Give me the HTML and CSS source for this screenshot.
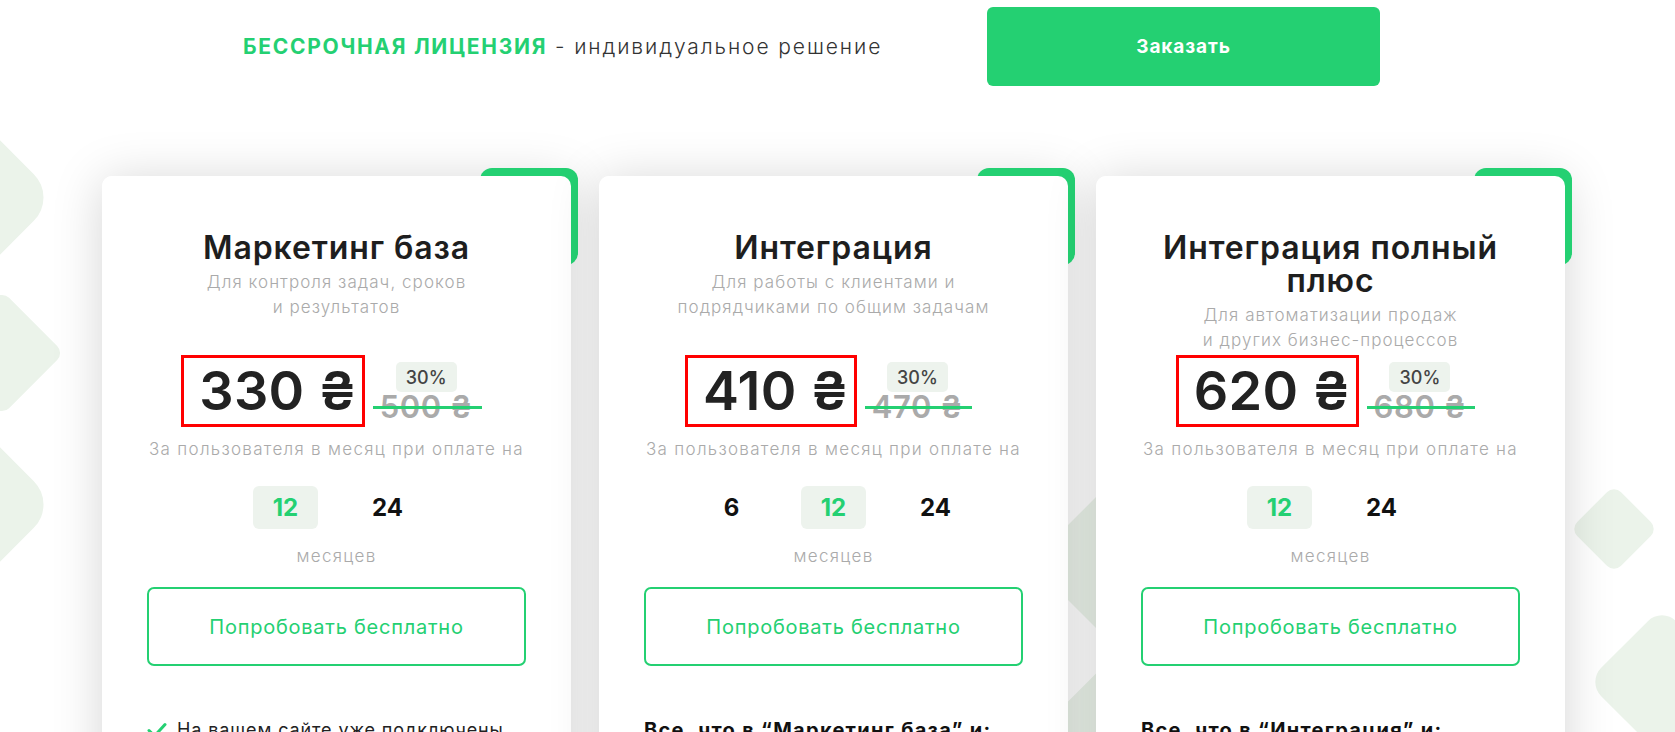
FILE: index.html
```html
<!DOCTYPE html>
<html lang="ru">
<head>
<meta charset="utf-8">
<title>Тарифы</title>
<link rel="stylesheet" href="styles.css">
</head>
<body>
<div class="bg" aria-hidden="true">
  <span class="shape s1"></span>
  <span class="shape s2"></span>
  <span class="shape s3"></span>
  <span class="shape s4"></span>
  <span class="shape s5"></span>
  <span class="shape s6"></span>
  <span class="shape s7"></span>
</div>

<header class="topbar">
  <p class="lead"><strong>БЕССРОЧНАЯ ЛИЦЕНЗИЯ</strong> - индивидуальное решение</p>
  <a class="order" href="#">Заказать</a>
</header>

<main class="plans">
  <section class="plan">
    <span class="plan-corner"></span>
    <div class="plan-card">
      <div class="plan-head">
        <h2 class="plan-title">Маркетинг база</h2>
        <p class="plan-sub">Для контроля задач, сроков<br>и результатов</p>
      </div>
      <div class="price-row">
        <div class="price">330 ₴</div>
        <div class="old">
          <span class="badge">30%</span>
          <span class="old-price">500 ₴</span>
        </div>
      </div>
      <p class="per">За пользователя в месяц при оплате на</p>
      <div class="terms">
        <span class="term on">12</span>
        <span class="term">24</span>
      </div>
      <p class="months">месяцев</p>
      <a class="try" href="#">Попробовать бесплатно</a>
      <ul class="features">
        <li><svg class="check" viewBox="0 0 20 16" width="20" height="16"><path d="M2 8.5 L7.5 14 L18 2.5" fill="none" stroke="#24d072" stroke-width="3" stroke-linecap="round" stroke-linejoin="round"/></svg>На вашем сайте уже подключены</li>
        <li><svg class="check" viewBox="0 0 20 16" width="20" height="16"><path d="M2 8.5 L7.5 14 L18 2.5" fill="none" stroke="#24d072" stroke-width="3" stroke-linecap="round" stroke-linejoin="round"/></svg>Управление задачами и сроками</li>
      </ul>
    </div>
  </section>

  <section class="plan">
    <span class="plan-corner"></span>
    <div class="plan-card">
      <div class="plan-head">
        <h2 class="plan-title">Интеграция</h2>
        <p class="plan-sub">Для работы с клиентами и<br>подрядчиками по общим задачам</p>
      </div>
      <div class="price-row">
        <div class="price">410 ₴</div>
        <div class="old">
          <span class="badge">30%</span>
          <span class="old-price">470 ₴</span>
        </div>
      </div>
      <p class="per">За пользователя в месяц при оплате на</p>
      <div class="terms">
        <span class="term">6</span>
        <span class="term on">12</span>
        <span class="term">24</span>
      </div>
      <p class="months">месяцев</p>
      <a class="try" href="#">Попробовать бесплатно</a>
      <p class="includes">Все, что в “Маркетинг база” и:</p>
    </div>
  </section>

  <section class="plan">
    <span class="plan-corner"></span>
    <div class="plan-card">
      <div class="plan-head">
        <h2 class="plan-title">Интеграция полный плюс</h2>
        <p class="plan-sub">Для автоматизации продаж<br>и других бизнес-процессов</p>
      </div>
      <div class="price-row">
        <div class="price">620 ₴</div>
        <div class="old">
          <span class="badge">30%</span>
          <span class="old-price">680 ₴</span>
        </div>
      </div>
      <p class="per">За пользователя в месяц при оплате на</p>
      <div class="terms">
        <span class="term on">12</span>
        <span class="term">24</span>
      </div>
      <p class="months">месяцев</p>
      <a class="try" href="#">Попробовать бесплатно</a>
      <p class="includes">Все, что в “Интеграция” и:</p>
    </div>
  </section>
</main>
</body>
</html>
```
FILE: styles.css
```css
* { box-sizing: border-box; }

html, body {
  margin: 0;
  height: 732px;
  overflow: hidden;
  background: #fff;
}

body {
  position: relative;
  font-family: Inter, "Noto Sans", sans-serif;
  color: #222;
}

/* decorative background diamonds */
.bg {
  position: absolute;
  inset: 0;
  pointer-events: none;
}
.shape {
  position: absolute;
  background: #ebf3ea;
  transform: rotate(45deg);
}
.s1 { left: -142px; top: 115px; width: 165px; height: 165px; border-radius: 33px; }
.s2 { left: -42px;  top: 309px; width: 88px;  height: 88px;  border-radius: 10px; }
.s3 { left: -142px; top: 422px; width: 165px; height: 165px; border-radius: 33px; }
.s4 { left: 1583px; top: 498px; width: 62px;  height: 62px;  border-radius: 10px; }
.s5 { left: 1609px; top: 629px; width: 106px; height: 106px; border-radius: 20px; }
.s6 { left: 1054px; top: 506px; width: 113px; height: 113px; border-radius: 12px; }
.s7 { left: 1072px; top: 652px; width: 156px; height: 156px; border-radius: 20px; }

/* top bar */
.topbar {
  position: relative;
  display: flex;
  align-items: center;
  gap: 100px;
  padding: 7px 0 0 243px;
}
.lead {
  flex: 0 0 644px;
  margin: 0;
  font-size: 21px;
  font-weight: 300;
  color: #333;
  letter-spacing: 1.9px;
  white-space: nowrap;
}
.lead strong {
  font-weight: 700;
  color: #24d072;
  letter-spacing: 1.7px;
}
.order {
  flex: 0 0 393px;
  height: 79px;
  display: flex;
  align-items: center;
  justify-content: center;
  background: #24d072;
  border-radius: 6px;
  color: #fff;
  font-size: 19px;
  font-weight: 700;
  letter-spacing: 0.9px;
  text-decoration: none;
}

/* plans */
.plans {
  position: relative;
  display: flex;
  gap: 28px;
  padding-left: 102px;
  margin-top: 90px;
}
.plan {
  position: relative;
  flex: 0 0 469px;
  border-radius: 10px;
  box-shadow: 0 4px 50px rgba(0, 0, 0, 0.17);
}
.plan-corner {
  position: absolute;
  top: -8px;
  right: -7px;
  width: 98px;
  height: 97px;
  background: #24d072;
  border-radius: 12px;
}
.plan-card {
  position: relative;
  background: #fff;
  border-radius: 10px;
  padding: 55px 45px 40px;
  min-height: 760px;
  text-align: center;
}
.plan-head {
  min-height: 124px;
}
.plan-title {
  margin: 0;
  font-size: 32px;
  line-height: 33px;
  font-weight: 600;
  color: #1e1e1e;
  letter-spacing: 0.9px;
}
.plan-sub {
  margin: 6px 0 0;
  font-size: 17px;
  line-height: 25px;
  font-weight: 300;
  color: #aaa;
  letter-spacing: 1.05px;
}

.price-row {
  display: flex;
  justify-content: center;
  align-items: center;
  gap: 15px;
  padding-right: 19px;
}
.price {
  border: 3px solid #f00;
  font-size: 54px;
  line-height: 66px;
  font-weight: 600;
  color: #222;
  letter-spacing: 0.3px;
  padding: 0 5px 0 15px;
  white-space: nowrap;
}
.old {
  display: flex;
  flex-direction: column;
  align-items: center;
}
.badge {
  width: 61px;
  height: 30px;
  display: flex;
  align-items: center;
  justify-content: center;
  background: #edf3ed;
  border-radius: 5px;
  font-size: 18px;
  font-weight: 500;
  color: #444;
}
.old-price {
  position: relative;
  margin-top: 2px;
  font-size: 31px;
  line-height: 26px;
  font-weight: 600;
  letter-spacing: 0.6px;
  color: #aaa;
  white-space: nowrap;
}
.old-price::after {
  content: "";
  position: absolute;
  left: -7px;
  right: -9px;
  top: 12px;
  height: 3px;
  background: #24d072;
}

.per {
  margin: 12px 0 0;
  font-size: 17px;
  line-height: 20px;
  font-weight: 300;
  color: #aaa;
  letter-spacing: 1.3px;
  white-space: nowrap;
}
.terms {
  display: flex;
  justify-content: center;
  gap: 37px;
  margin-top: 27px;
}
.term {
  width: 65px;
  height: 43px;
  display: flex;
  align-items: center;
  justify-content: center;
  border-radius: 6px;
  font-size: 24px;
  font-weight: 700;
  color: #111;
}
.term.on {
  background: #edf3ed;
  color: #24d072;
}
.months {
  margin: 17px 0 0;
  font-size: 17px;
  line-height: 20px;
  font-weight: 300;
  color: #aaa;
  letter-spacing: 1.3px;
}
.try {
  margin-top: 21px;
  height: 79px;
  display: flex;
  align-items: center;
  justify-content: center;
  border: 2px solid #24d072;
  border-radius: 7px;
  color: #24d072;
  font-size: 20px;
  font-weight: 400;
  text-decoration: none;
  letter-spacing: 0.75px;
}
.features {
  list-style: none;
  margin: 52px 0 0;
  padding: 0;
  text-align: left;
}
.features li {
  display: flex;
  align-items: center;
  gap: 10px;
  font-size: 18px;
  line-height: 24px;
  color: #222;
  letter-spacing: 0.9px;
  margin-bottom: 12px;
}
.check { flex: none; }
.includes {
  margin: 52px 0 0;
  text-align: left;
  font-size: 20px;
  line-height: 24px;
  font-weight: 700;
  letter-spacing: 1.3px;
  color: #111;
}
```
